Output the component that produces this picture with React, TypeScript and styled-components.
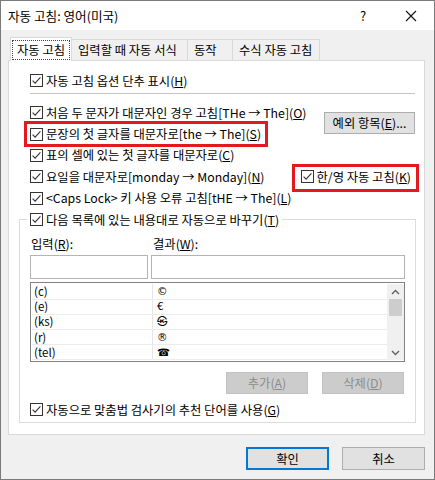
import React from "react";
import styled, { createGlobalStyle } from "styled-components";

const GlobalStyle = createGlobalStyle`
  html, body { margin: 0; padding: 0; background: #fff; }
  body {
    font-family: "Noto Sans CJK KR", "Noto Sans", sans-serif;
    font-size: 12.3px;
    color: #000;
  }
  * { box-sizing: border-box; }
`;

const Window = styled.div`
  width: 435px;
  height: 480px;
  border: 1px solid #7a7a7a;
  background: #f0f0f0;
  display: flex;
  flex-direction: column;
`;

const TitleBar = styled.div`
  height: 29px;
  background: #fff;
  display: flex;
  align-items: center;
  padding-left: 7px;
`;

const Title = styled.div`
  flex: 1;
  font-size: 12.6px;
`;

const TitleButton = styled.div<{ $w: number }>`
  width: ${(p) => p.$w}px;
  height: 29px;
  display: flex;
  align-items: center;
  justify-content: center;
  font-size: 13px;
`;

const Body = styled.div`
  flex: 1;
  padding: 7px 9px 0 7px;
  display: flex;
  flex-direction: column;
`;

const TabStrip = styled.div`
  display: flex;
  align-items: flex-end;
  height: 24px;
  padding-left: 3px;
  margin-bottom: -1px;
  position: relative;
  z-index: 1;
`;

const Tab = styled.div<{ $active?: boolean; $w: number }>`
  width: ${(p) => p.$w}px;
  height: ${(p) => (p.$active ? 24 : 21)}px;
  margin-bottom: ${(p) => (p.$active ? 0 : 1)}px;
  margin-left: -1px;
  background: ${(p) => (p.$active ? "#fff" : "#f0f0f0")};
  border: 1px solid #d9d9d9;
  border-bottom: none;
  display: flex;
  align-items: center;
  padding-left: ${(p) => (p.$active ? 1 : 6)}px;
  white-space: nowrap;
`;

const FocusLabel = styled.span`
  border: 1px dotted #444;
  padding: 1px 4px;
  line-height: 16px;
`;

const Panel = styled.div`
  height: 375px;
  background: #fff;
  border: 1px solid #d9d9d9;
  padding-top: 9px;
  display: flex;
  flex-direction: column;
`;

const Indent = styled.div`
  padding-left: 21px;
`;

const Separator = styled.div`
  height: 1px;
  background: #c4c4c4;
  margin: 1.3px 9px 0 21px;
`;

const OptionsGrid = styled.div`
  display: grid;
  grid-template-columns: minmax(0, 1fr) auto;
  margin-top: 8.3px;
  padding: 0 9px 0 21px;
`;

const Column = styled.div`
  display: flex;
  flex-direction: column;
`;

const RightColumn = styled.div`
  display: flex;
  flex-direction: column;
  align-items: flex-end;
`;

const Row = styled.div`
  height: 21.4px;
  display: flex;
  align-items: center;
  gap: 3px;
  white-space: nowrap;
  width: fit-content;
`;

const Highlight = styled.div<{ $t: number; $r: number; $b: number; $l: number }>`
  position: relative;
  width: fit-content;
  &::after {
    content: "";
    position: absolute;
    top: ${(p) => p.$t}px;
    right: ${(p) => p.$r}px;
    bottom: ${(p) => p.$b}px;
    left: ${(p) => p.$l}px;
    border: 3px solid #e3191f;
    pointer-events: none;
  }
`;

const U = styled.span`
  text-decoration: underline;
  text-underline-offset: 1px;
`;

const Button = styled.div<{ $w: number; $h: number; $default?: boolean; $disabled?: boolean }>`
  width: ${(p) => p.$w}px;
  height: ${(p) => p.$h}px;
  display: flex;
  align-items: center;
  justify-content: center;
  white-space: nowrap;
  background: ${(p) => (p.$disabled ? "#cccccc" : "#e1e1e1")};
  border: ${(p) =>
    p.$default ? "2px solid #0078d7" : p.$disabled ? "1px solid #c2c2c2" : "1px solid #adadad"};
  color: ${(p) => (p.$disabled ? "#8c8c8c" : "#000")};
`;

const ExceptionButton = styled(Button)`
  margin-top: 9.7px;
`;

const HanWrap = styled(Highlight)`
  margin-top: 32.5px;
  margin-right: 4px;
`;

const GroupBox = styled.fieldset`
  margin: 0 8px 0 10px;
  padding: 0 10px 2px 10px;
  border: 1px solid #dcdcdc;
  min-width: 0;
`;

const Legend = styled.legend`
  padding: 0 3px;
  margin-left: -3px;
`;

const LabelRow = styled.div`
  display: grid;
  grid-template-columns: 121px 1fr;
  margin-top: 5px;
  height: 16px;
  align-items: center;
`;

const FieldLabel = styled.div<{ $pad?: number }>`
  padding-left: ${(p) => p.$pad ?? 1}px;
`;

const InputRow = styled.div`
  display: grid;
  grid-template-columns: 118px 1fr;
  gap: 3px;
  margin-top: 4px;
`;

const TextBox = styled.div`
  height: 24px;
  border: 1px solid #b4b4b4;
  background: #fff;
`;

const ListBox = styled.div`
  margin-top: 3px;
  height: 80px;
  border: 1px solid #828282;
  display: flex;
  padding: 1px 0 1px 1px;
`;

const ListRows = styled.div`
  flex: 1;
  display: flex;
  flex-direction: column;
`;

const ListRow = styled.div`
  display: grid;
  grid-template-columns: 121px 1fr;
  height: 15.4px;
  border-bottom: 1px solid #ececec;
  overflow: hidden;
`;

const Cell = styled.div<{ $first?: boolean }>`
  display: flex;
  align-items: center;
  padding-left: ${(p) => (p.$first ? 2 : 4)}px;
  border-right: ${(p) => (p.$first ? "1px solid #e6e6e6" : "none")};
  font-size: 11.5px;
  line-height: 13px;
`;

const SymbolCell = styled(Cell)`
  font-family: "DejaVu Sans", "Noto Sans CJK KR", sans-serif;
  font-size: 10.5px;
`;

const Scrollbar = styled.div`
  width: 17px;
  background: #f0f0f0;
  display: flex;
  flex-direction: column;
  align-items: center;
`;

const ScrollArrow = styled.div`
  height: 15px;
  width: 17px;
  display: flex;
  align-items: center;
  justify-content: center;
`;

const ScrollThumb = styled.div`
  width: 13px;
  height: 17px;
  background: #cdcdcd;
`;

const ScrollTrack = styled.div`
  flex: 1;
`;

const ActionRow = styled.div`
  display: flex;
  justify-content: flex-end;
  gap: 14px;
  margin-top: 10px;
  padding-right: 1px;
`;

const LastRow = styled(Row)`
  margin-top: 4.5px;
`;

const Footer = styled.div`
  display: flex;
  justify-content: flex-end;
  gap: 13px;
  padding-top: 12px;
`;

function CheckBox() {
  return (
    <svg width="13" height="13" viewBox="0 0 13 13">
      <rect x="0.5" y="0.5" width="12" height="12" fill="#fff" stroke="#333" />
      <path d="M2.6 6.6 L5.1 9.1 L10.4 3.4" fill="none" stroke="#333" strokeWidth="1.1" />
    </svg>
  );
}

function Check({ children }: { children: React.ReactNode }) {
  return (
    <Row>
      <CheckBox />
      <span>{children}</span>
    </Row>
  );
}

function Chevron({ up }: { up?: boolean }) {
  return (
    <svg width="9" height="6" viewBox="0 0 9 6">
      <path
        d={up ? "M1 5 L4.5 1.5 L8 5" : "M1 1 L4.5 4.5 L8 1"}
        fill="none"
        stroke="#606060"
        strokeWidth="1.4"
      />
    </svg>
  );
}

const entries: [string, string][] = [
  ["(c)", "©"],
  ["(e)", "€"],
  ["(ks)", "㉿"],
  ["(r)", "®"],
  ["(tel)", "☎"],
];

export default function App() {
  return (
    <>
      <GlobalStyle />
      <Window>
        <TitleBar>
          <Title>자동 고침: 영어(미국)</Title>
          <TitleButton $w={50}>?</TitleButton>
          <TitleButton $w={46}>
            <svg width="12" height="12" viewBox="0 0 12 12">
              <path d="M1 1 L11 11 M11 1 L1 11" stroke="#111" strokeWidth="1.1" />
            </svg>
          </TitleButton>
        </TitleBar>
        <Body>
          <TabStrip>
            <Tab $active $w={62}>
              <FocusLabel>자동 고침</FocusLabel>
            </Tab>
            <Tab $w={117}>입력할 때 자동 서식</Tab>
            <Tab $w={46}>동작</Tab>
            <Tab $w={88}>수식 자동 고침</Tab>
          </TabStrip>
          <Panel>
            <Indent>
              <Check>
                자동 고침 옵션 단추 표시(<U>H</U>)
              </Check>
            </Indent>
            <Separator />
            <OptionsGrid>
              <Column>
                <Check>
                  처음 두 문자가 대문자인 경우 고침[THe → The](<U>O</U>)
                </Check>
                <Highlight $t={-2.7} $r={-7} $b={-2} $l={-6}>
                  <Check>
                    문장의 첫 글자를 대문자로[the → The](<U>S</U>)
                  </Check>
                </Highlight>
                <Check>
                  표의 셀에 있는 첫 글자를 대문자로(<U>C</U>)
                </Check>
                <Check>
                  요일을 대문자로[monday → Monday](<U>N</U>)
                </Check>
                <Check>
                  &lt;Caps Lock&gt; 키 사용 오류 고침[tHE → The](<U>L</U>)
                </Check>
              </Column>
              <RightColumn>
                <ExceptionButton $w={91} $h={22}>
                  예외 항목(<U>E</U>)...
                </ExceptionButton>
                <HanWrap $t={-2.5} $r={-8} $b={-4} $l={-9}>
                  <Check>
                    한/영 자동 고침(<U>K</U>)
                  </Check>
                </HanWrap>
              </RightColumn>
            </OptionsGrid>
            <GroupBox>
              <Legend>
                <Check>
                  다음 목록에 있는 내용대로 자동으로 바꾸기(<U>T</U>)
                </Check>
              </Legend>
              <LabelRow>
                <FieldLabel>
                  입력(<U>R</U>):
                </FieldLabel>
                <FieldLabel $pad={2}>
                  결과(<U>W</U>):
                </FieldLabel>
              </LabelRow>
              <InputRow>
                <TextBox />
                <TextBox />
              </InputRow>
              <ListBox>
                <ListRows>
                  {entries.map(([from, to]) => (
                    <ListRow key={from}>
                      <Cell $first>{from}</Cell>
                      <SymbolCell>{to}</SymbolCell>
                    </ListRow>
                  ))}
                </ListRows>
                <Scrollbar>
                  <ScrollArrow>
                    <Chevron up />
                  </ScrollArrow>
                  <ScrollThumb />
                  <ScrollTrack />
                  <ScrollArrow>
                    <Chevron />
                  </ScrollArrow>
                </Scrollbar>
              </ListBox>
              <ActionRow>
                <Button $w={82} $h={22} $disabled>
                  추가(<U>A</U>)
                </Button>
                <Button $w={82} $h={22} $disabled>
                  삭제(<U>D</U>)
                </Button>
              </ActionRow>
              <LastRow>
                <CheckBox />
                <span>
                  자동으로 맞춤법 검사기의 추천 단어를 사용(<U>G</U>)
                </span>
              </LastRow>
            </GroupBox>
          </Panel>
          <Footer>
            <Button $w={83} $h={23} $default>
              확인
            </Button>
            <Button $w={83} $h={23}>
              취소
            </Button>
          </Footer>
        </Body>
      </Window>
    </>
  );
}
